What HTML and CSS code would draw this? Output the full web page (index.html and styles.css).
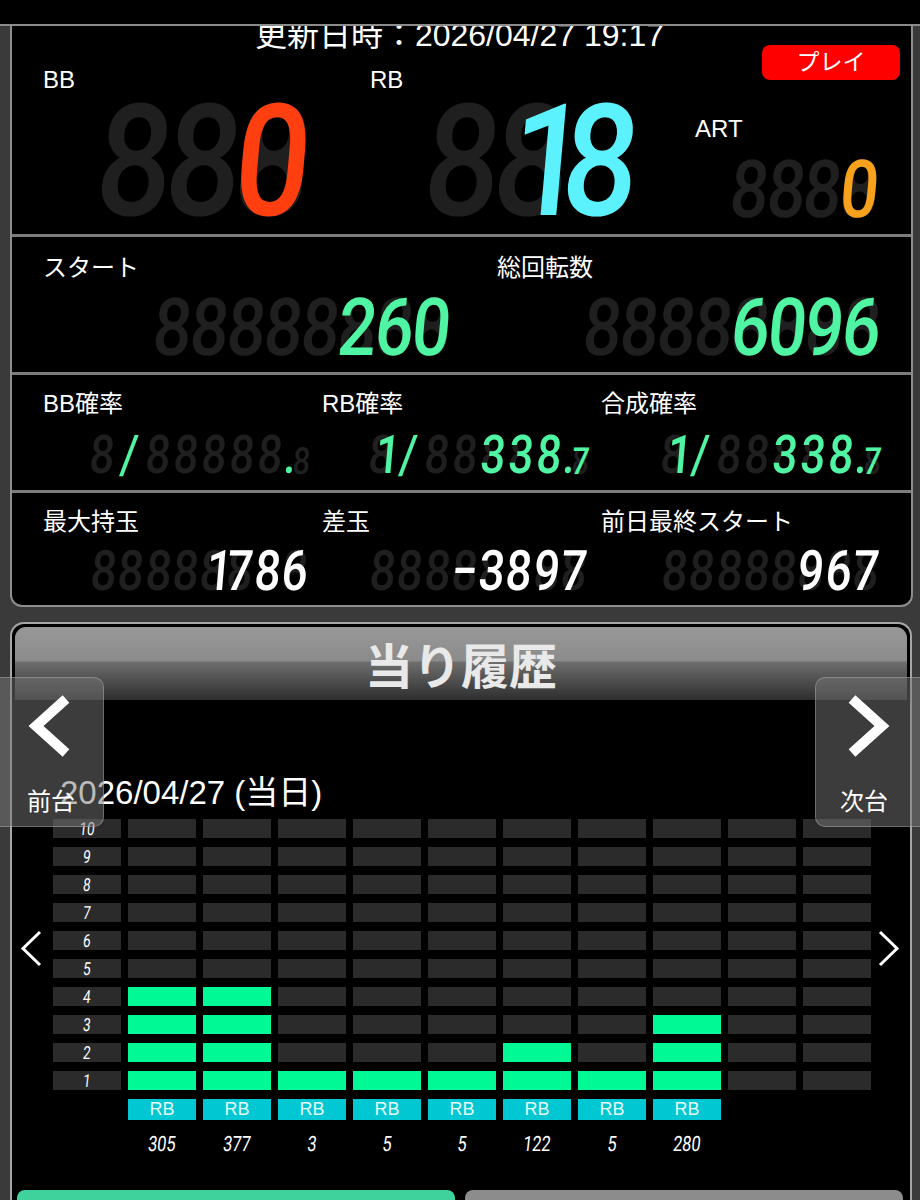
FILE: index.html
```html
<!DOCTYPE html>
<html lang="ja">
<head>
<meta charset="utf-8">
<title>当り履歴</title>
<link rel="stylesheet" href="styles.css">
</head>
<body>
<header class="topbar"></header>

<section class="panel">
  <div class="sec sec1">
    <div class="upd-row">
      <div class="upd">更新日時：2026/04/27 19:17</div>
      <div class="play">プレイ</div>
    </div>
    <div class="counts">
      <div class="cnt">
        <div class="lbl">BB</div>
        <div class="disp big red"><span class="c"></span><span class="c"></span><span class="c"><b>0</b></span></div>
      </div>
      <div class="cnt rbc">
        <div class="lbl">RB</div>
        <div class="disp big cyan"><span class="c"></span><span class="c"><b class="one">1</b></span><span class="c"><b>8</b></span></div>
      </div>
      <div class="cnt artc">
        <div class="lbl">ART</div>
        <div class="disp art orange"><span class="c"></span><span class="c"></span><span class="c"></span><span class="c"><b>0</b></span></div>
      </div>
    </div>
  </div>

  <div class="sec fields sec2">
    <div class="fld">
      <div class="lbl">スタート</div>
      <div class="disp mid green"><span class="c"></span><span class="c"></span><span class="c"></span><span class="c"></span><span class="c"></span><span class="c"><b>2</b></span><span class="c"><b>6</b></span><span class="c"><b>0</b></span></div>
    </div>
    <div class="fld">
      <div class="lbl">総回転数</div>
      <div class="disp mid green"><span class="c"></span><span class="c"></span><span class="c"></span><span class="c"></span><span class="c"><b>6</b></span><span class="c"><b>0</b></span><span class="c"><b>9</b></span><span class="c"><b>6</b></span></div>
    </div>
  </div>

  <div class="sec fields sec3">
    <div class="fld">
      <div class="lbl">BB確率</div>
      <div class="disp prob green"><span class="c"></span><span class="c nog"><b>/</b></span><span class="c"></span><span class="c"></span><span class="c"></span><span class="c"></span><span class="c"></span><span class="c nog dot"><b>.</b></span><span class="c mini"></span></div>
    </div>
    <div class="fld">
      <div class="lbl">RB確率</div>
      <div class="disp prob green"><span class="c"><b class="one">1</b></span><span class="c nog"><b>/</b></span><span class="c"></span><span class="c"></span><span class="c"><b>3</b></span><span class="c"><b>3</b></span><span class="c"><b>8</b></span><span class="c nog dot"><b>.</b></span><span class="c mini"><b>7</b></span></div>
    </div>
    <div class="fld">
      <div class="lbl">合成確率</div>
      <div class="disp prob green"><span class="c"><b class="one">1</b></span><span class="c nog"><b>/</b></span><span class="c"></span><span class="c"></span><span class="c"><b>3</b></span><span class="c"><b>3</b></span><span class="c"><b>8</b></span><span class="c nog dot"><b>.</b></span><span class="c mini"><b>7</b></span></div>
    </div>
  </div>

  <div class="sec fields sec4">
    <div class="fld">
      <div class="lbl">最大持玉</div>
      <div class="disp cnt8 white"><span class="c"></span><span class="c"></span><span class="c"></span><span class="c"></span><span class="c"><b class="one">1</b></span><span class="c"><b>7</b></span><span class="c"><b>8</b></span><span class="c"><b>6</b></span></div>
    </div>
    <div class="fld">
      <div class="lbl">差玉</div>
      <div class="disp cnt8 white"><span class="c"></span><span class="c"></span><span class="c"></span><span class="c"><b>−</b></span><span class="c"><b>3</b></span><span class="c"><b>8</b></span><span class="c"><b>9</b></span><span class="c"><b>7</b></span></div>
    </div>
    <div class="fld">
      <div class="lbl">前日最終スタート</div>
      <div class="disp cnt8 white"><span class="c"></span><span class="c"></span><span class="c"></span><span class="c"></span><span class="c"></span><span class="c"><b>9</b></span><span class="c"><b>6</b></span><span class="c"><b>7</b></span></div>
    </div>
  </div>
</section>

<section class="hist">
  <h2 class="hist-h">当り履歴</h2>
  <div class="date">2026/04/27 (当日)</div>

  <div class="chart">
    <svg class="arr arr-l" viewBox="0 0 22 37"><polyline points="20,2 3,18.5 20,35"/></svg>
    <svg class="arr arr-r" viewBox="0 0 22 37"><polyline points="2,2 19,18.5 2,35"/></svg>

    <i class="lb"><b>10</b></i><i></i><i></i><i></i><i></i><i></i><i></i><i></i><i></i><i></i><i></i>
    <i class="lb"><b>9</b></i><i></i><i></i><i></i><i></i><i></i><i></i><i></i><i></i><i></i><i></i>
    <i class="lb"><b>8</b></i><i></i><i></i><i></i><i></i><i></i><i></i><i></i><i></i><i></i><i></i>
    <i class="lb"><b>7</b></i><i></i><i></i><i></i><i></i><i></i><i></i><i></i><i></i><i></i><i></i>
    <i class="lb"><b>6</b></i><i></i><i></i><i></i><i></i><i></i><i></i><i></i><i></i><i></i><i></i>
    <i class="lb"><b>5</b></i><i></i><i></i><i></i><i></i><i></i><i></i><i></i><i></i><i></i><i></i>
    <i class="lb"><b>4</b></i><i class="on"></i><i class="on"></i><i></i><i></i><i></i><i></i><i></i><i></i><i></i><i></i>
    <i class="lb"><b>3</b></i><i class="on"></i><i class="on"></i><i></i><i></i><i></i><i></i><i></i><i class="on"></i><i></i><i></i>
    <i class="lb"><b>2</b></i><i class="on"></i><i class="on"></i><i></i><i></i><i></i><i class="on"></i><i></i><i class="on"></i><i></i><i></i>
    <i class="lb"><b>1</b></i><i class="on"></i><i class="on"></i><i class="on"></i><i class="on"></i><i class="on"></i><i class="on"></i><i class="on"></i><i class="on"></i><i></i><i></i>

    <span class="chip first">RB</span><span class="chip">RB</span><span class="chip">RB</span><span class="chip">RB</span><span class="chip">RB</span><span class="chip">RB</span><span class="chip">RB</span><span class="chip">RB</span>

    <span class="num first">305</span><span class="num">377</span><span class="num">3</span><span class="num">5</span><span class="num">5</span><span class="num">122</span><span class="num">5</span><span class="num">280</span>
  </div>

  <div class="btns">
    <div class="btn btn-g"></div>
    <div class="btn btn-gray"></div>
  </div>

  <div class="nav nav-prev">
    <svg class="chev" viewBox="0 0 42 64"><polyline points="38,5 8,32 38,59"/></svg>
    <span>前台</span>
  </div>
  <div class="nav nav-next">
    <svg class="chev" viewBox="0 0 42 64"><polyline points="4,5 34,32 4,59"/></svg>
    <span>次台</span>
  </div>
</section>
</body>
</html>
```

FILE: styles.css
```css
*, *::before, *::after { box-sizing: border-box; }

html, body {
  margin: 0;
  padding: 0;
  overflow: hidden;
}

body {
  width: 920px;
  height: 1200px;
  background: #3a3a3a;
  color: #fff;
  font-family: "Liberation Sans", "Noto Sans CJK JP", sans-serif;
}

.topbar {
  height: 26px;
  background: #000;
  border-bottom: 2px solid #8c8c8c;
}

/* ---------- data panel ---------- */
.panel {
  margin: 0 7px 0 10px;
  border: 2px solid #8e8e8e;
  border-top: 0;
  border-radius: 0 0 12px 12px;
  background: #000;
}

.sec + .sec { border-top: 3px solid #7c7c7c; }

.sec1 {
  display: flow-root;
  height: 208px;
}

.upd-row {
  display: grid;
  grid-template-columns: 1fr auto 1fr;
  grid-template-rows: 32px;
  margin-top: -7px;
}

.upd {
  grid-column: 2;
  font-size: 32px;
  line-height: 32px;
  white-space: nowrap;
  margin-left: -4px;
  clip-path: inset(7px -20px -20px -20px);
}

.play {
  grid-column: 3;
  justify-self: end;
  align-self: start;
  margin: 26px 11px 0 0;
  width: 138px;
  height: 35px;
  border-radius: 8px;
  background: #fe0000;
  font-size: 23px;
  line-height: 35px;
  text-align: center;
}

.counts {
  display: grid;
  grid-template-columns: 327px 325px 1fr;
  align-items: end;
  margin-top: 15px;
  padding-left: 31px;
}

.lbl {
  font-size: 24px;
  line-height: 28px;
  white-space: nowrap;
}

.cnt .disp { margin: 9px 0 0 48px; }
.cnt.rbc .disp { margin-left: 49px; }
.cnt.artc .disp { margin: 17px 0 0 32px; }

.fields {
  display: grid;
  padding-left: 31px;
}

.sec2 {
  height: 138px;
  padding-top: 17px;
  grid-template-columns: 403px 379px;
  column-gap: 51px;
}
.sec2 .disp { margin-top: 16px; }

.sec3 {
  height: 118px;
  padding-top: 15px;
  grid-template-columns: 263px 263px 276px;
  column-gap: 16px;
}
.sec3 .disp { margin-top: 17px; }

.sec4 {
  height: 115px;
  padding-top: 15px;
  grid-template-columns: 263px 263px 276px;
  column-gap: 16px;
}
.sec4 .disp { margin-top: 14px; }

/* ---------- LED style digit displays ---------- */
.disp {
  display: flex;
  align-items: flex-end;
  font-family: Roboto, "Liberation Sans", sans-serif;
  font-weight: 500;
}
.fields .disp { justify-content: flex-end; }

.big   { --w: 69px;    --h: 117px; --s: .85; }
.art   { --w: 36.5px;  --h: 60px;  --s: .85; }
.mid   { --w: 37px;    --h: 60px;  --s: .85; }
.prob  { --w: 28px;    --h: 40px;  --s: .82; }
.cnt8  { --w: 27.25px; --h: 42px;  --s: .82; }

.c {
  flex: none;
  display: grid;
  justify-items: center;
  align-items: center;
  width: var(--w);
  height: var(--h);
  font-size: calc(var(--h) / 0.75);
  line-height: var(--h);
}
.c::before,
.c b {
  grid-area: 1 / 1;
  transform: translateX(var(--tx, 0px)) scaleX(var(--s)) skewX(-6deg);
}
.c::before {
  content: "8";
  color: #1f1f1f;
}
.c b { font-weight: inherit; }
.c b.one { --tx: calc(var(--w) * .24); }
.c.nog::before { content: none; }
.c.dot { width: 8px; }
.c.mini { --h: 28px; width: 15px; }

.red b    { color: #ff3f0f; }
.cyan b   { color: #5cf2fd; }
.orange b { color: #f8a11c; }
.green b  { color: #4ff5a2; }
.white b  { color: #ffffff; }

/* ---------- history panel ---------- */
.hist {
  position: relative;
  margin: 15px 8px 0 10px;
  height: 600px;
  border: 2px solid #a6a6a6;
  border-bottom: 0;
  border-radius: 14px 14px 0 0;
  background: #000;
}

.hist-h {
  margin: 3px 3px 0;
  height: 73px;
  border-radius: 11px 11px 0 0;
  background: linear-gradient(#989898 0, #8b8b8b 34px, #6e6e6e 35px, #2e2e2e 73px);
  text-align: center;
  font-family: "Noto Sans CJK JP", sans-serif;
  font-size: 48px;
  font-weight: 700;
  line-height: 73px;
  color: #e9e9e9;
}

.date {
  margin: 75px 0 0 48px;
  font-size: 33px;
  line-height: 36px;
}

.chart {
  display: grid;
  grid-template-columns: 34px 68px repeat(10, 68px) 22px;
  grid-template-rows: repeat(10, 19px) 21px 30px;
  gap: 9px 7px;
  margin-top: 8px;
}

.arr {
  grid-row: 1 / 11;
  align-self: start;
  margin-top: 111px;
  width: 22px;
  height: 37px;
  fill: none;
  stroke: #fff;
  stroke-width: 3;
}
.arr-l { grid-column: 1; justify-self: start; margin-left: 8px; }
.arr-r { grid-column: 13; }

.chart > i {
  background: #2b2b2b;
  font-style: normal;
}
.chart > i.on { background: #00f995; }
.chart > i.lb {
  display: flex;
  justify-content: center;
  align-items: center;
}
.lb b {
  display: inline-block;
  font: 400 18px/19px Roboto, sans-serif;
  color: #fff;
  transform: scaleX(.75) skewX(-8deg);
}

.chip {
  background: #00c7d1;
  color: #e6fbfb;
  font-size: 18px;
  line-height: 21px;
  text-align: center;
}
.chip.first, .num.first { grid-column-start: 3; }

.num {
  font: 400 21px/30px Roboto, sans-serif;
  text-align: center;
  transform: scaleX(.78) skewX(-8deg);
}

.btns {
  display: flex;
  gap: 10px;
  margin: 31px 0 0 5px;
}
.btn {
  width: 438px;
  height: 50px;
  border-radius: 8px 8px 0 0;
}
.btn-g { background: #3fd29c; }
.btn-gray { background: #8c8c8c; }

/* ---------- overlay prev / next buttons ---------- */
.nav {
  position: absolute;
  top: 53px;
  height: 150px;
  display: flex;
  flex-direction: column;
  align-items: flex-start;
  background: rgba(120, 120, 120, .5);
  border: 1px solid rgba(200, 200, 200, .35);
  border-radius: 10px;
}
.nav-prev { left: -20px; width: 112px; padding: 16px 0 0 35px; }
.nav-next { left: 803px; width: 120px; padding: 16px 0 0 32px; }

.chev {
  width: 42px;
  height: 64px;
  fill: none;
  stroke: #fff;
  stroke-width: 10;
}
.nav span {
  margin-top: 30px;
  font-size: 24px;
  line-height: 28px;
}
.nav-prev span { margin-left: -1px; }
.nav-next span { margin-left: -8px; }
```
